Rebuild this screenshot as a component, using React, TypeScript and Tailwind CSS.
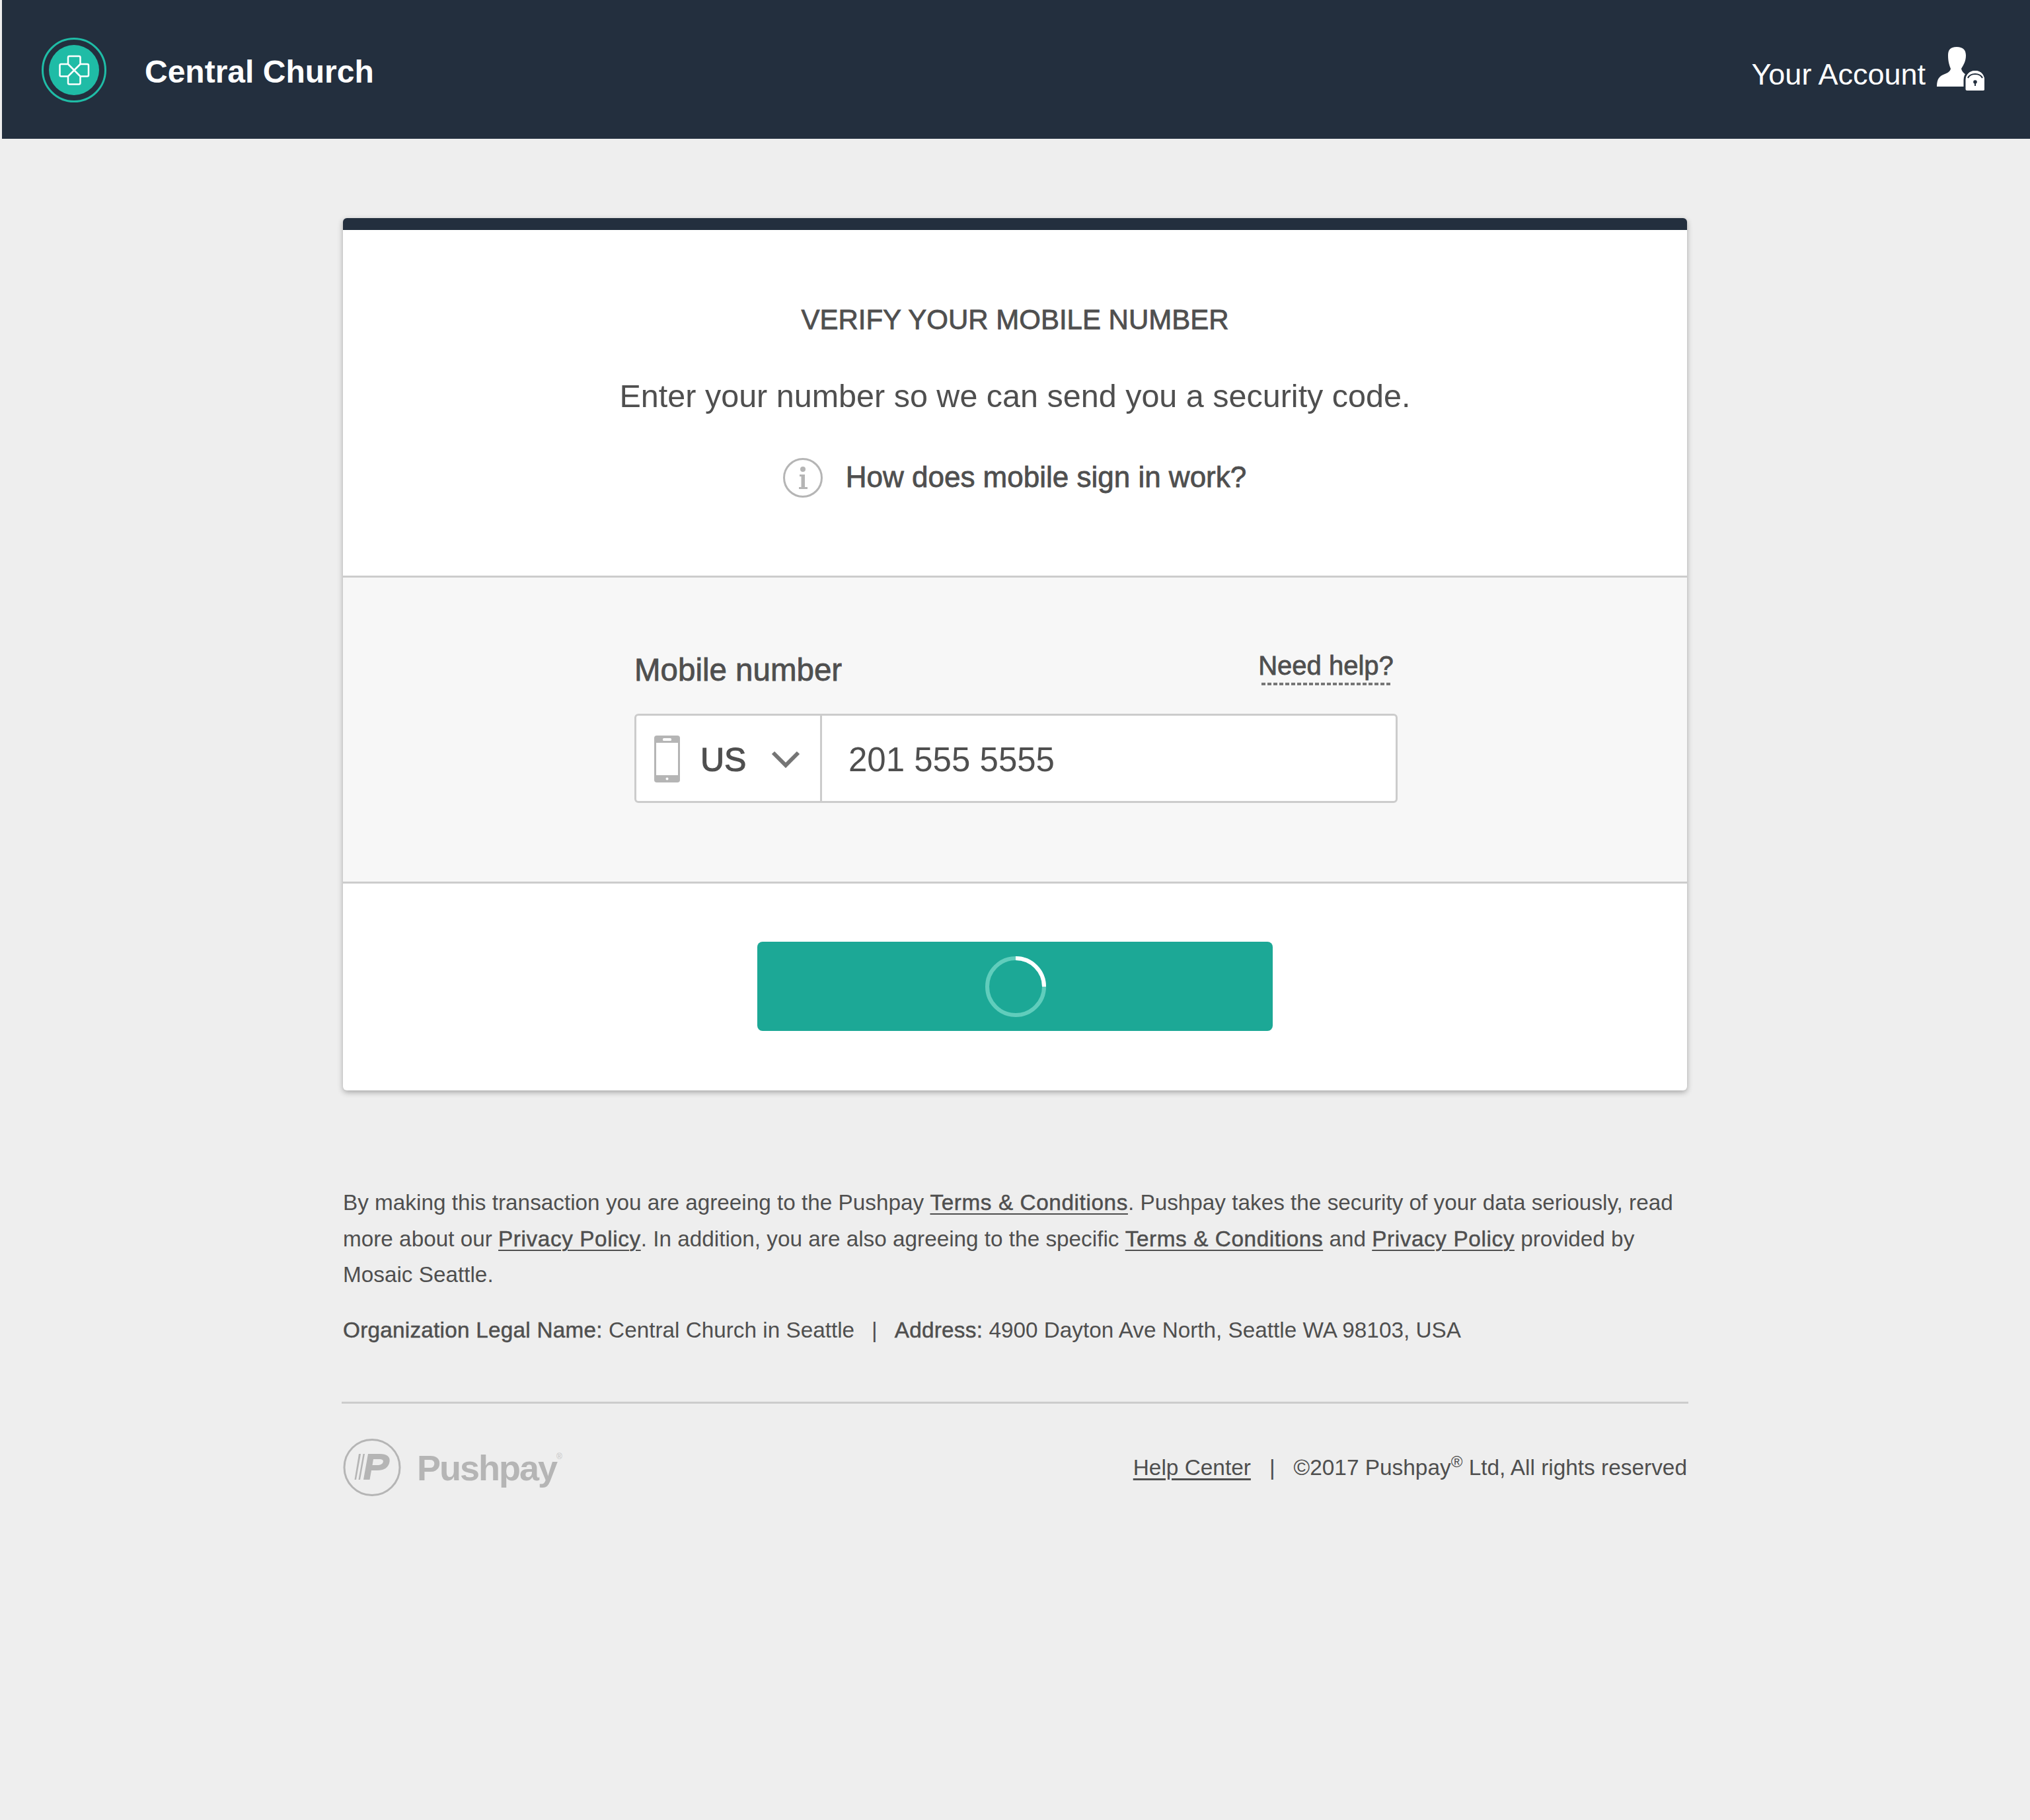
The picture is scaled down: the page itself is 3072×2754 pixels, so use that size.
import React from "react";

const medium = "[-webkit-text-stroke:0.8px_#4f4f4f]";

function ChurchLogo() {
  return (
    <svg width="98" height="98" viewBox="0 0 98 98" className="block shrink-0">
      <circle cx="49" cy="49" r="47.5" fill="none" stroke="#1fbca6" strokeWidth="3" />
      <circle cx="49" cy="49" r="38" fill="#1fbca6" />
      <path
        fill="none"
        stroke="#fff"
        strokeWidth="2.500"
        strokeLinejoin="round"
        d="M40 40 V30 a2 2 0 0 1 2-2 H56.500 a2 2 0 0 1 2 2 V40 H69 a2 2 0 0 1 2 2 V56.500 a2 2 0 0 1-2 2 H58.500 V68.500 a2 2 0 0 1-2 2 H42 a2 2 0 0 1-2-2 V58.500 H29.500 a2 2 0 0 1-2-2 V42 a2 2 0 0 1 2-2 Z M40 40 L58.500 58.500 M58.500 40 L40 58.500"
      />
    </svg>
  );
}

function AccountIcon() {
  return (
    <svg width="72" height="66" viewBox="0 0 72 66" className="block shrink-0">
      <path
        fill="#fff"
        d="M30 0 C20 0 17 5 17 13 C17 22 19 28 21 33 C20 37 17 39 12 41 C4 44 0 48 0 60 H44 V42 C40 39 38 37 37 33 C40 28 44 22 44 13 C44 5 40 0 30 0 Z"
      />
      <path
        fill="#fff"
        stroke="#232f3e"
        strokeWidth="3"
        d="M45 67 a3 3 0 0 1-3-3 V50 C42 41 49 34.500 58 34.500 C67 34.500 73.500 41 73.500 50 V64 a3 3 0 0 1-3 3 Z"
      />
      <path fill="#fff" d="M46 66 a2 2 0 0 1-2-2 V50 C44 42 50 36 58 36 C66 36 72 42 72 50 V64 a2 2 0 0 1-2 2 Z" />
      <path fill="none" stroke="#232f3e" strokeWidth="2" d="M47 47 C49 43 53 41 58 41 C63 41 67 43 69 47" />
      <circle cx="58" cy="53" r="2.800" fill="#232f3e" />
      <rect x="57" y="53" width="2" height="6" fill="#232f3e" />
    </svg>
  );
}

function InfoIcon() {
  return (
    <svg width="62" height="60" viewBox="0 0 62 60" className="block shrink-0">
      <circle cx="31" cy="30" r="28.500" fill="none" stroke="#b5b5b5" strokeWidth="3" />
      <circle cx="31" cy="17" r="4" fill="#b5b5b5" />
      <path fill="#b5b5b5" d="M26 25 H34 V44 H38 V47 H25 V44 H28.500 V28 H26 Z" />
    </svg>
  );
}

function PhoneIcon() {
  return (
    <svg width="39" height="71" viewBox="0 0 39 71" className="block shrink-0 mt-[1px]">
      <rect width="39" height="71" rx="4" fill="#b5b5b5" />
      <rect x="3" y="11" width="33" height="49" fill="#fff" />
      <rect x="13" y="4" width="13" height="4" rx="1.500" fill="#fff" />
      <circle cx="19.500" cy="65.500" r="2" fill="#fff" />
    </svg>
  );
}

function Spinner() {
  return (
    <svg width="92" height="92" viewBox="0 0 92 92" className="block ml-[2px]">
      <circle cx="46" cy="46" r="43" fill="none" stroke="#60cdbc" strokeWidth="6" />
      <path d="M46 3 A43 43 0 0 1 89 46" fill="none" stroke="#fff" strokeWidth="6" />
    </svg>
  );
}

function PushpayMark() {
  return (
    <svg width="88" height="87" viewBox="0 0 88 87" className="block shrink-0">
      <circle cx="44" cy="43.500" r="42" fill="none" stroke="#b5b5b5" strokeWidth="3" />
      <path fill="#b5b5b5" d="M24 23 H27 L20 62 H17.500 Z M30.500 23 H33 L26 62 H23.500 Z" />
      <path
        fill="#b5b5b5"
        fillRule="evenodd"
        d="M38 23 H56 C66 23 72 27 70.500 35 C69 44 62 48 52 48 H43 L40.500 62 H31 Z M46 31 L44.500 40 H52 C57 40 60 38.500 60.800 35 C61.300 32 59 31 55 31 Z"
      />
    </svg>
  );
}

function A({ children }: { children: React.ReactNode }) {
  return <a className="underline underline-offset-[5px] decoration-2 tracking-[0.6px] [-webkit-text-stroke:0.5px_#4f4f4f]">{children}</a>;
}

function Strong({ children }: { children: React.ReactNode }) {
  return <span className="tracking-[0.25px] [-webkit-text-stroke:0.5px_#4f4f4f]">{children}</span>;
}

export default function App() {
  return (
    <div className="min-h-[2754px] bg-[#eeeeee] font-['Liberation_Sans',Arial,sans-serif] text-[#4f4f4f]">
      <header className="ml-[3px] h-[210px] bg-[#232f3e] flex items-center justify-between pl-[60px] pr-[69px] text-white">
        <div className="flex items-center gap-[58px] mt-[2px]">
          <ChurchLogo />
          <span className="text-[48px] font-bold leading-none mt-[5px]">Central Church</span>
        </div>
        <div className="flex items-center gap-[17px] -mt-[3px]">
          <span className="text-[45px] leading-none mt-[18px]">Your Account</span>
          <AccountIcon />
        </div>
      </header>

      <main className="w-[2034px] mx-auto pt-[120px]">
        <section className="bg-white rounded-[6px] overflow-hidden shadow-[0_3px_8px_rgba(0,0,0,0.3)] border-t-[18px] border-[#232f3e]">
          <div className="h-[526px] flex flex-col items-center border-b-[3px] border-[#cccccc]">
            <h1 className={`mt-[112px] text-[42px] leading-[48px] ${medium}`}>VERIFY YOUR MOBILE NUMBER</h1>
            <p className="mt-[61px] text-[48.500px] leading-[60px]">Enter your number so we can send you a security code.</p>
            <div className="mt-[64px] flex items-center gap-[34px] -ml-[2px]">
              <InfoIcon />
              <span className={`text-[44px] leading-[50px] -mt-[3px] ${medium}`}>How does mobile sign in work?</span>
            </div>
          </div>

          <div className="h-[463px] bg-[#f7f7f7] border-b-[3px] border-[#cccccc] pl-[441px] pt-[99px]">
            <div className="w-[1155px]">
              <div className="flex justify-between items-start h-[107px]">
                <span className={`text-[47.500px] leading-[56px] mt-[13px] ${medium}`}>Mobile number</span>
                <div className="mr-[11px] mt-[11px] flex flex-col items-center w-[195px]">
                  <span className={`text-[40px] leading-[46px] whitespace-nowrap ${medium}`}>Need help?</span>
                  <div className="mt-[3px] w-full h-[4px] bg-[repeating-linear-gradient(90deg,#777777_0_6px,transparent_6px_9px)]" />
                </div>
              </div>
              <div className="h-[135px] bg-white border-[3px] border-[#cccccc] rounded-[6px] flex items-center">
                <div className="w-[281px] h-full border-r-[3px] border-[#cccccc] flex items-center pl-[27px]">
                  <PhoneIcon />
                  <span className="ml-[31px] mt-[5px] text-[50px] leading-none [-webkit-text-stroke:1.2px_#4f4f4f]">US</span>
                  <svg width="44" height="26" viewBox="0 0 44 26" className="ml-[38px] mt-[2px] block">
                    <path d="M3 3 L22 22 L41 3" fill="none" stroke="#757575" strokeWidth="6" />
                  </svg>
                </div>
                <span className="ml-[40px] mt-[4px] text-[51px] leading-none">201 555 5555</span>
              </div>
            </div>
          </div>

          <div className="h-[313px] pt-[88px] flex justify-center">
            <div className="w-[780px] h-[135px] bg-[#1ca896] rounded-[8px] flex items-center justify-center">
              <Spinner />
            </div>
          </div>
        </section>

        <footer className="mt-[143px] text-[33.300px] leading-[54.500px]">
          <p>
            By making this transaction you are agreeing to the Pushpay <A>Terms &amp; Conditions</A>. Pushpay takes the security of your data seriously, read more about our <A>Privacy Policy</A>. In addition, you are also agreeing to the specific <A>Terms &amp; Conditions</A> and <A>Privacy Policy</A> provided by Mosaic Seattle.
          </p>
          <p className="mt-[29px]">
            <Strong>Organization Legal Name:</Strong> Central Church in Seattle
            <span className="mx-[26px]">|</span>
            <Strong>Address:</Strong> 4900 Dayton Ave North, Seattle WA 98103, USA
          </p>
          <div className="mt-[81px] -mx-[2px] h-[3px] bg-[#cccccc]" />
          <div className="mt-[53px] flex items-center justify-between">
            <div className="flex items-center gap-[24px]">
              <PushpayMark />
              <div className="flex items-start">
                <span className="text-[54px] font-bold leading-none tracking-[-2px] text-[#b5b5b5]">Pushpay</span>
                <span className="text-[12px] leading-none text-[#c4c4c4] mt-[4px]">®</span>
              </div>
            </div>
            <div className="mt-[2px] text-[33.400px]">
              <a className="underline underline-offset-[5px]">Help Center</a>
              <span className="mx-[28px]">|</span>
              ©2017 Pushpay<sup className="text-[24px] leading-none">®</sup> Ltd, All rights reserved
            </div>
          </div>
        </footer>
      </main>
    </div>
  );
}
